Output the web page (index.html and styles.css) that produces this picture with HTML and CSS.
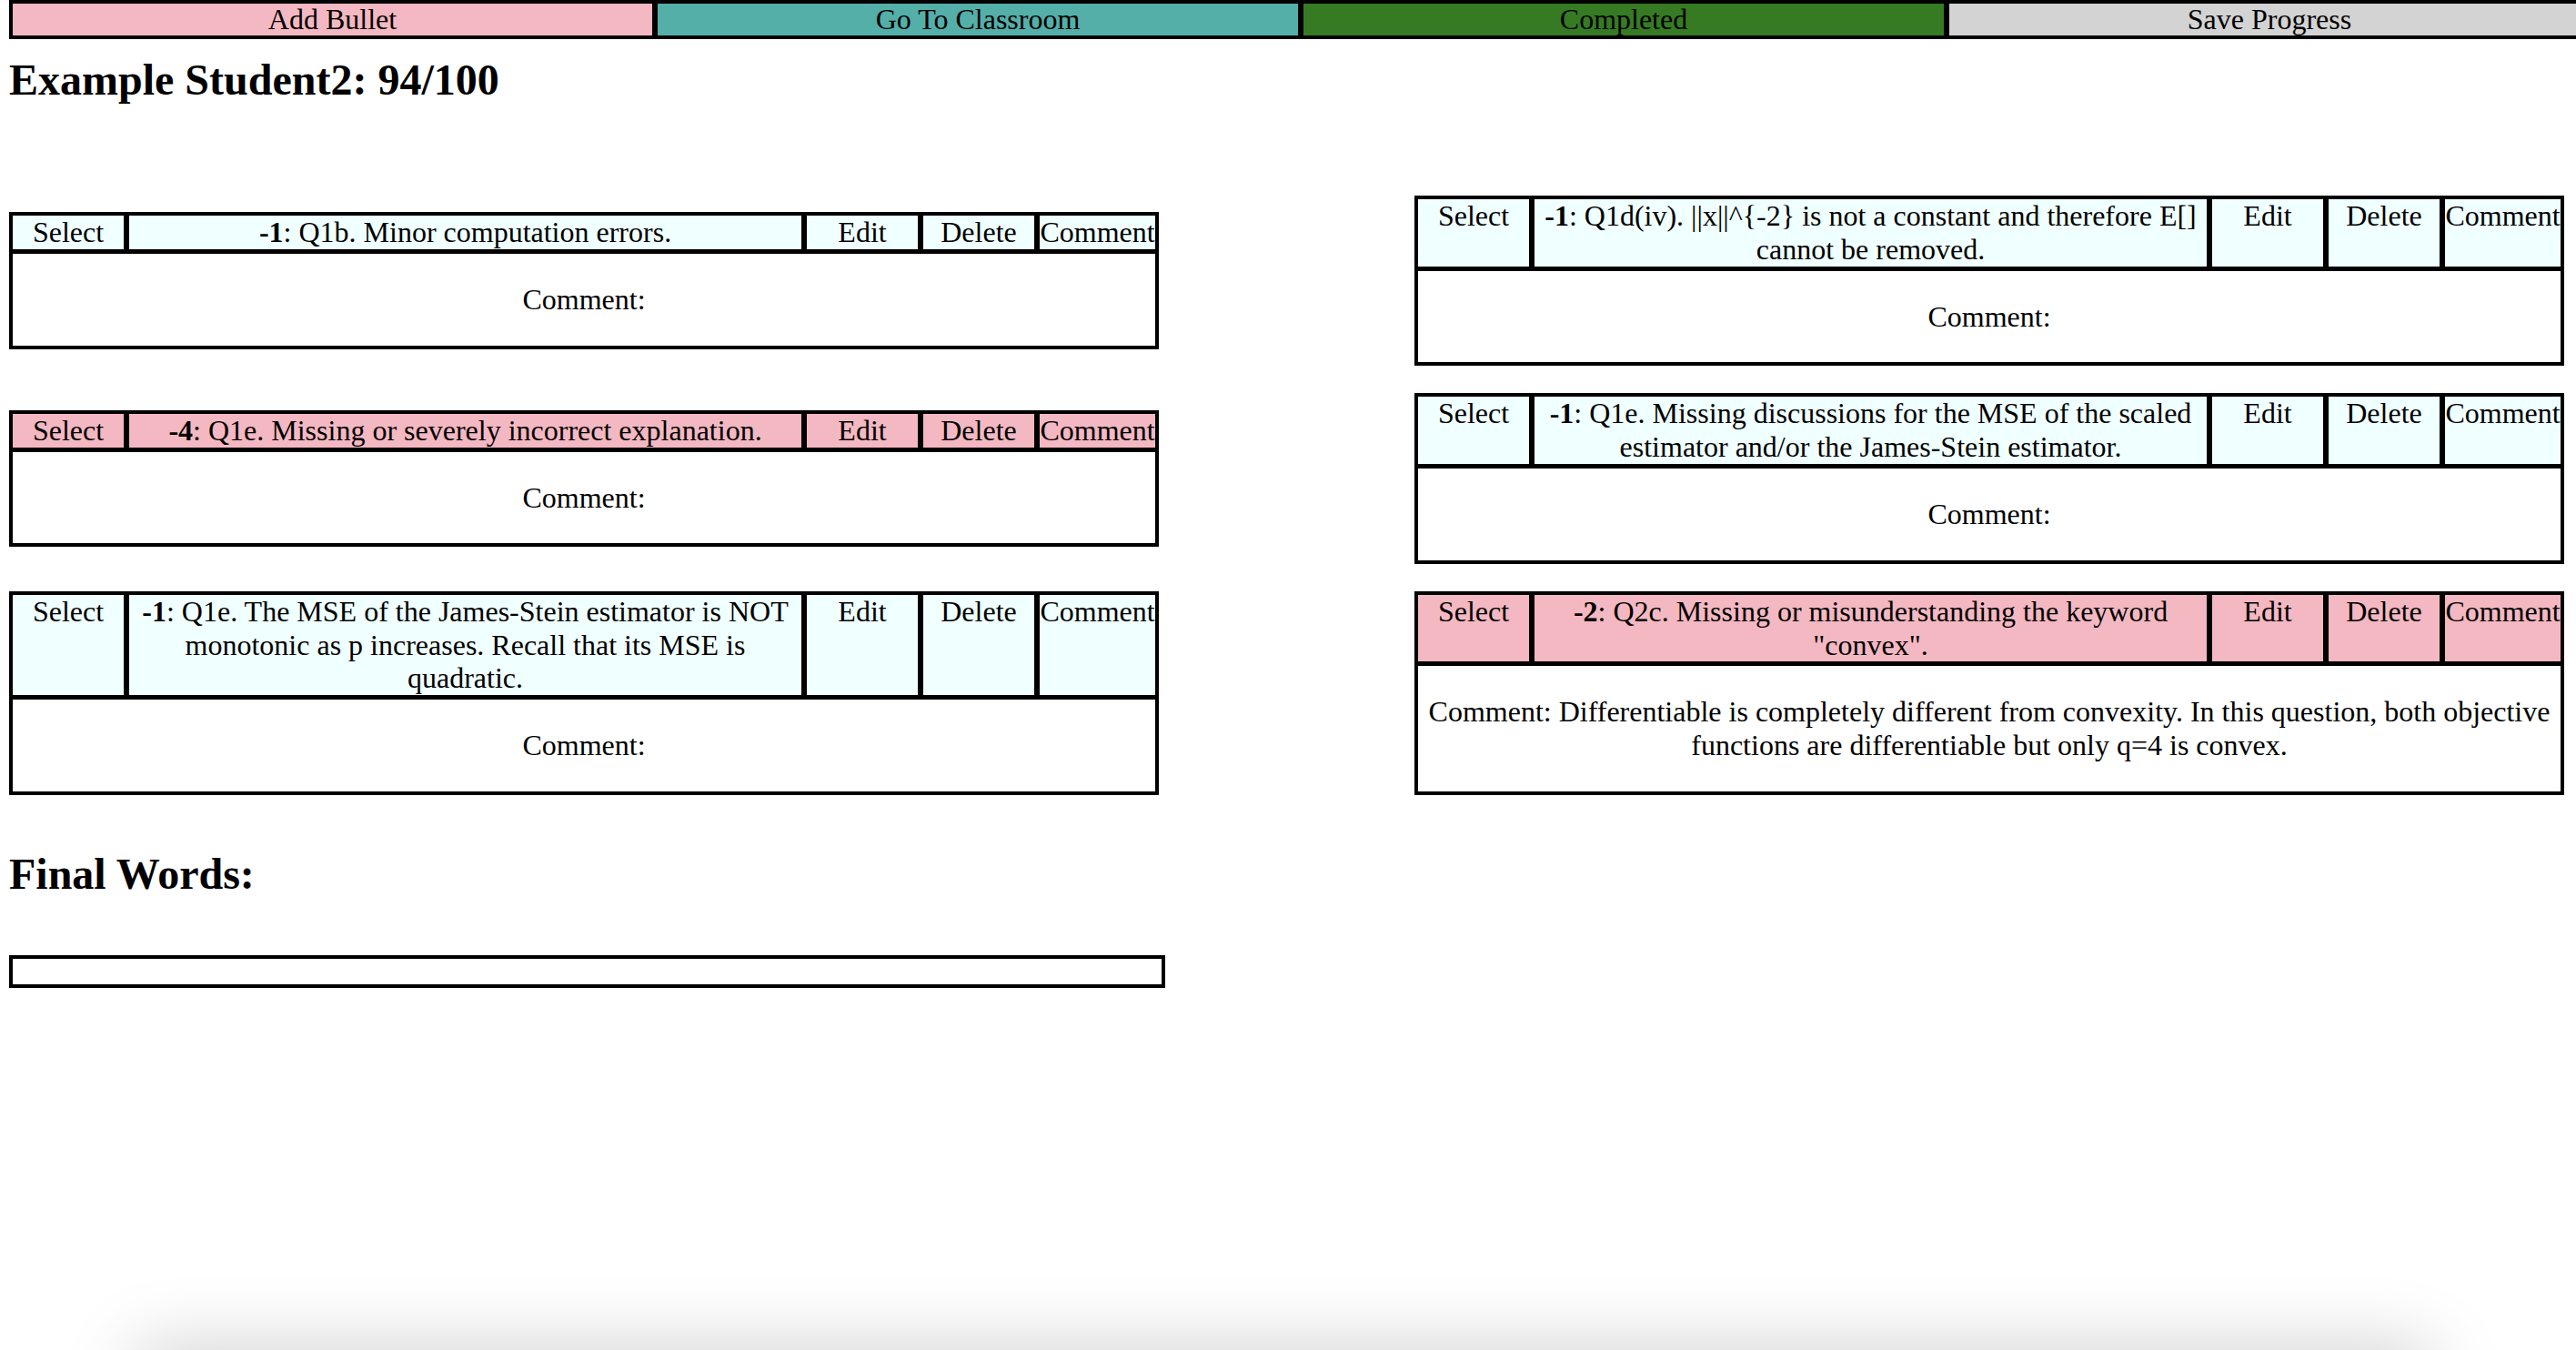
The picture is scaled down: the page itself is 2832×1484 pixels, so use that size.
FILE: index.html
```html
<!DOCTYPE html>
<html>
<head>
<meta charset="utf-8">
<title>Grading</title>
<link rel="stylesheet" href="styles.css">
</head>
<body>
<div class="topbar">
  <div class="btn btn-pink first">Add Bullet</div>
  <div class="btn btn-teal">Go To Classroom</div>
  <div class="btn btn-green">Completed</div>
  <div class="btn btn-gray">Save Progress</div>
</div>

<h2 class="title">Example Student2: 94/100</h2>

<div class="grid">
  <div class="card">
    <div class="head azure">
      <div class="cell fixed">Select</div>
      <div class="cell text"><b>-1</b>: Q1b. Minor computation errors.</div>
      <div class="cell fixed">Edit</div>
      <div class="cell fixed">Delete</div>
      <div class="cell last">Comment</div>
    </div>
    <p class="comment">Comment:</p>
  </div>

  <div class="card">
    <div class="head azure">
      <div class="cell fixed">Select</div>
      <div class="cell text"><b>-1</b>: Q1d(iv). ||x||^{-2} is not a constant and therefore E[] cannot be removed.</div>
      <div class="cell fixed">Edit</div>
      <div class="cell fixed">Delete</div>
      <div class="cell last">Comment</div>
    </div>
    <p class="comment">Comment:</p>
  </div>

  <div class="card">
    <div class="head pink">
      <div class="cell fixed">Select</div>
      <div class="cell text"><b>-4</b>: Q1e. Missing or severely incorrect explanation.</div>
      <div class="cell fixed">Edit</div>
      <div class="cell fixed">Delete</div>
      <div class="cell last">Comment</div>
    </div>
    <p class="comment">Comment:</p>
  </div>

  <div class="card">
    <div class="head azure">
      <div class="cell fixed">Select</div>
      <div class="cell text"><b>-1</b>: Q1e. Missing discussions for the MSE of the scaled estimator and/or the James-Stein estimator.</div>
      <div class="cell fixed">Edit</div>
      <div class="cell fixed">Delete</div>
      <div class="cell last">Comment</div>
    </div>
    <p class="comment">Comment:</p>
  </div>

  <div class="card">
    <div class="head azure">
      <div class="cell fixed">Select</div>
      <div class="cell text"><b>-1</b>: Q1e. The MSE of the James-Stein estimator is NOT monotonic as p increases. Recall that its MSE is quadratic.</div>
      <div class="cell fixed">Edit</div>
      <div class="cell fixed">Delete</div>
      <div class="cell last">Comment</div>
    </div>
    <p class="comment">Comment:</p>
  </div>

  <div class="card">
    <div class="head pink">
      <div class="cell fixed">Select</div>
      <div class="cell text"><b>-2</b>: Q2c. Missing or misunderstanding the keyword "convex".</div>
      <div class="cell fixed">Edit</div>
      <div class="cell fixed">Delete</div>
      <div class="cell last">Comment</div>
    </div>
    <p class="comment">Comment: Differentiable is completely different from convexity. In this question, both objective functions are differentiable but only q=4 is convex.</p>
  </div>
</div>

<h2 class="final">Final Words:</h2>
<div class="final-box"></div>

<div class="bottom-shadow"></div>
</body>
</html>
```

FILE: styles.css
```css
html {
  overflow: hidden;
}

body {
  margin: 0;
  padding: 0 10px;
  font-family: "Liberation Serif", "Times New Roman", serif;
  font-size: 32px;
  color: #000;
  background: #fff;
}

.topbar {
  display: flex;
  width: max-content;
}

.btn {
  flex: 0 0 auto;
  width: 710px;
  box-sizing: border-box;
  height: 43px;
  border-top: 4px solid #000;
  border-bottom: 4px solid #000;
  border-left: 3px solid #000;
  border-right: 3px solid #000;
  text-align: center;
  line-height: 35px;
  font-size: 32px;
}

.btn.first {
  border-left-width: 4px;
}

.btn-pink { background: #f4b8c2; }
.btn-teal { background: #54afa9; }
.btn-green { background: #367b23; }
.btn-gray { background: #d3d3d3; }

.title {
  font-size: 48px;
  line-height: 55px;
  margin: 17px 0 0;
}

.grid {
  display: grid;
  grid-template-columns: 1264px 1264px;
  column-gap: 281px;
  row-gap: 30px;
  align-items: center;
  margin-top: 100px;
}

.card {
  border: 4px solid #000;
}

.head {
  display: flex;
  border-bottom: 5px solid #000;
}

.head.azure { background: #f0ffff; }
.head.pink { background: #f4b8c2; }

.cell {
  text-align: center;
  line-height: 36.8px;
  border-right: 6px solid #000;
}

.cell.fixed {
  flex: 0 0 122px;
}

.cell.text {
  flex: 1 1 auto;
  padding: 0 2px;
}

.cell.last {
  flex: 0 0 127px;
  border-right: 0;
}

.comment {
  margin: 0;
  padding: 32px 0;
  text-align: center;
  line-height: 36.8px;
  background: #fff;
}

.final {
  font-size: 48px;
  line-height: 55px;
  margin: 59px 0 0;
}

.final-box {
  margin-top: 62px;
  width: 1271px;
  height: 36px;
  box-sizing: border-box;
  border: 4px solid #000;
}

.bottom-shadow {
  position: fixed;
  left: 150px;
  right: 160px;
  top: 100%;
  height: 60px;
  box-shadow: 0 0 80px 0 rgba(0, 0, 0, 0.22);
}
```
